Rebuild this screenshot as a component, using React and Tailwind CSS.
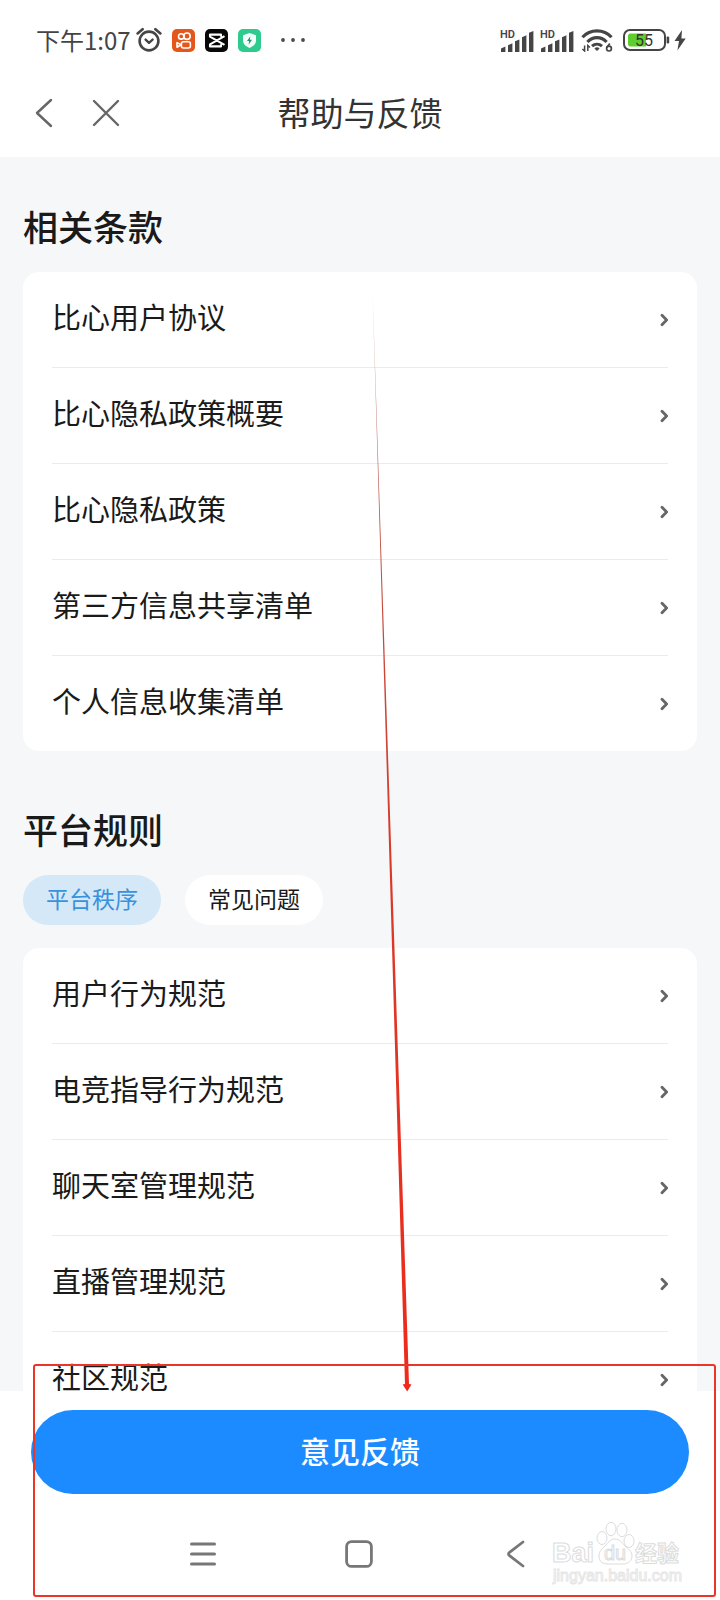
import React, { useState } from 'react';

const terms = ['比心用户协议', '比心隐私政策概要', '比心隐私政策', '第三方信息共享清单', '个人信息收集清单'];

const tabs = [
  { id: 'order', label: '平台秩序' },
  { id: 'faq', label: '常见问题' },
];

const rules = ['用户行为规范', '电竞指导行为规范', '聊天室管理规范', '直播管理规范', '社区规范'];

const AlarmIcon = () => (
  <svg width="26" height="26" viewBox="0 0 26 26" fill="none" stroke="#454545" strokeLinecap="round" strokeLinejoin="round">
    <circle cx="13" cy="14" r="9.4" strokeWidth="2.6" />
    <path d="M9.6 12.6l3.4 3.2 3.6-3.2" strokeWidth="2.4" />
    <path d="M1.6 6.4L6.6 2.2M24.4 6.4l-5-4.2" strokeWidth="2.6" />
  </svg>
);

const KuaishouIcon = () => (
  <svg width="23" height="23" viewBox="0 0 23 23" fill="none" stroke="#fff" strokeWidth="1.6">
    <rect width="23" height="23" rx="5" fill="#e4561c" stroke="none" />
    <circle cx="9.2" cy="7.4" r="2.7" />
    <circle cx="15" cy="7.2" r="3.2" />
    <rect x="9.4" y="12.8" width="9" height="6.2" rx="2" />
    <path d="M9 15.8l-4-2.2v4.6z" strokeLinejoin="round" />
  </svg>
);

const CapCutIcon = () => (
  <svg width="23" height="23" viewBox="0 0 23 23" fill="none" stroke="#fff" strokeWidth="2.1" strokeLinejoin="round">
    <rect width="23" height="23" rx="5" fill="#080808" stroke="none" />
    <path d="M19.5 7.2L5 15.4v2h11v-2.2M19.5 15.8L5 7.6v-2h11v2.2" />
  </svg>
);

const ShieldIcon = () => (
  <svg width="23" height="23" viewBox="0 0 23 23">
    <rect width="23" height="23" rx="5" fill="#2fcb8e" />
    <path d="M11.5 4L18 6.3v5c0 3.6-2.6 6.2-6.5 7.7C7.6 17.5 5 14.9 5 11.3v-5z" fill="#f2fffa" />
    <path d="M12.4 7.2L9 12h2.2l-.6 3.7L14 10.8h-2.2z" fill="#23936b" />
  </svg>
);

const SignalIcon = () => (
  <svg className="overflow-visible" width="34" height="28" viewBox="0 -4 34 28" fill="#454545">
    <text x="0" y="8" fontSize="11" fontWeight="600" fontFamily="Roboto, sans-serif">HD</text>
    <path d="M1 22v-3.5l4.4-2V22zM8 22v-6.8l4.4-2V22zM15 22V11.2l4.4-1.8V22zM22 22V7.2l4.4-2V22zM29 22V2.8L33.4 1v21z" />
  </svg>
);

const WifiIcon = () => (
  <svg width="32" height="24" viewBox="0 0 32 24" fill="none" stroke="#454545">
    <path d="M1.5 9.3C9.2.8 22.8.8 30.5 9.3" strokeWidth="3.2" />
    <path d="M6.4 14c5.2-5.8 14-5.8 19.2 0" strokeWidth="3.1" />
    <path d="M11 18.2c2.9-2.6 7.1-2.6 10 0" strokeWidth="3" />
    <path d="M13.4 20.5a3.7 3.7 0 0 1 5.2 0L16 23z" fill="#454545" stroke="none" />
    <path d="M3.6 17.5V23l-2.2-2M6.8 23v-5.5l2.2 2" strokeWidth="1.5" />
    <path d="M28.8 15.6l-3 4" strokeWidth="1.7" />
    <circle cx="28" cy="20.6" r="2.4" strokeWidth="1.7" />
  </svg>
);

const BatteryIcon = () => (
  <svg width="47" height="22" viewBox="0 0 47 22">
    <rect x="1" y="1" width="41" height="20" rx="6" fill="#fff" stroke="#454545" strokeWidth="2" />
    <path d="M7.5 4.5H23v13H7.5A2.5 2.5 0 0 1 5 15V7a2.5 2.5 0 0 1 2.5-2.5z" fill="#5fcd2e" />
    <rect x="43.6" y="7.5" width="2.6" height="7" rx="1" fill="#454545" />
    <text x="21" y="16.5" fontSize="16" textAnchor="middle" fill="#333" fontFamily="Roboto, sans-serif">55</text>
  </svg>
);

const BoltIcon = () => (
  <svg width="12" height="22" viewBox="0 0 12 22" fill="#454545">
    <path d="M8 1L.5 12H5l-1.6 9.5L11.7 9.5H7.4z" />
  </svg>
);

const StatusBar = () => (
  <div className="flex h-[70px] items-center justify-between pt-[10px] pr-[34px] pl-9">
    <div className="flex items-center gap-[10px]">
      <div className="flex items-center gap-[5px]">
        <span className="text-2xl whitespace-nowrap text-[#444]">下午1:07</span>
        <AlarmIcon />
      </div>
      <KuaishouIcon />
      <CapCutIcon />
      <ShieldIcon />
      <svg className="ml-[10px]" width="24" height="4" viewBox="0 0 24 4" fill="#4a4a4a">
        <circle cx="2" cy="2" r="1.9" />
        <circle cx="12" cy="2" r="1.9" />
        <circle cx="22" cy="2" r="1.9" />
      </svg>
    </div>
    <div className="flex items-center gap-[6px]">
      <SignalIcon />
      <SignalIcon />
      <div className="flex items-center gap-[10px] pl-[1px]">
        <WifiIcon />
        <div className="flex items-center gap-1">
          <BatteryIcon />
          <BoltIcon />
        </div>
      </div>
    </div>
  </div>
);

const Header = () => (
  <header className="flex h-[87px] items-center px-[34px] pb-[2px]">
    <div className="flex flex-1 items-center gap-[38px]">
      <button type="button" aria-label="返回">
        <svg width="20" height="30" viewBox="0 0 20 30" fill="none" stroke="#666" strokeWidth="2.4" strokeLinecap="round" strokeLinejoin="round">
          <path d="M17 2L3 15l14 13" />
        </svg>
      </button>
      <button type="button" aria-label="关闭">
        <svg width="28" height="28" viewBox="0 0 28 28" fill="none" stroke="#666" strokeWidth="2.4" strokeLinecap="round">
          <path d="M2 2l24 24M26 2L2 26" />
        </svg>
      </button>
    </div>
    <h1 className="pb-[2px] text-[33px] leading-[48px] text-[#333]">帮助与反馈</h1>
    <div className="flex-1" />
  </header>
);

const LinkList = ({ items }) => (
  <ul className="divide-y divide-[#ebebeb] rounded-2xl bg-white px-[29px]">
    {items.map((item) => (
      <li key={item}>
        <a href="#" className="flex h-[95px] items-center justify-between text-[29px] leading-[30px] text-[#1a1a1a]">
          <span className="pb-[7px]">{item}</span>
          <svg width="8" height="14" viewBox="0 0 8 14" fill="none" stroke="#666" strokeWidth="2.8" strokeLinecap="round" strokeLinejoin="round">
            <path d="M2 2.2L6.6 7 2 11.8" />
          </svg>
        </a>
      </li>
    ))}
  </ul>
);

const NavBar = () => (
  <nav className="flex h-[106px] items-center justify-center gap-32 pt-[14px] pr-[2px]">
    <button type="button" aria-label="菜单">
      <svg width="28" height="28" viewBox="0 0 28 28" fill="none" stroke="#777" strokeWidth="3" strokeLinecap="round">
        <path d="M2.5 4h23M2.5 14h23M2.5 24h23" />
      </svg>
    </button>
    <button type="button" aria-label="主页">
      <svg width="28" height="28" viewBox="0 0 28 28" fill="none" stroke="#777" strokeWidth="2.8">
        <rect x="1.6" y="1.6" width="24.8" height="24.8" rx="5" />
      </svg>
    </button>
    <button type="button" aria-label="后退">
      <svg width="28" height="28" viewBox="0 0 28 28" fill="none" stroke="#777" strokeWidth="2.8" strokeLinecap="round" strokeLinejoin="round">
        <path d="M22 2L8.5 12.4q-2 1.6 0 3.2L22 26" />
      </svg>
    </button>
  </nav>
);

const Watermark = () => (
  <svg className="absolute right-[38px] bottom-[14px]" width="132" height="66" viewBox="0 0 132 66" fill="#fff" stroke="#dcdcdc" strokeWidth="1">
    <text x="2" y="42" fontSize="27" fontWeight="700" fontFamily="Liberation Sans, Arial, sans-serif">Bai</text>
    <ellipse cx="52" cy="18" rx="5" ry="6.5" />
    <ellipse cx="61" cy="9" rx="5" ry="6.7" />
    <ellipse cx="72" cy="10" rx="5" ry="6.7" />
    <ellipse cx="79" cy="21" rx="5" ry="6.5" />
    <path d="M65 19c-5 0-7 4-10 7-3 3-6 5-6 10 0 6 4 8 9 8h15c5 0 9-3 9-8 0-5-4-7-7-10-3-3-5-7-10-7z" />
    <text x="54" y="40" fontSize="20" fontFamily="Liberation Sans, Arial, sans-serif">du</text>
    <text x="85" y="41" fontSize="22" fontWeight="700" fontFamily="Noto Sans CJK SC, sans-serif">经验</text>
    <text x="3" y="61" fontSize="16" stroke="#e6e6e6" fontFamily="Liberation Sans, Arial, sans-serif">jingyan.baidu.com</text>
  </svg>
);

const Annotation = () => (
  <div className="pointer-events-none absolute inset-0">
    <svg className="h-full w-full" viewBox="0 0 720 1600" preserveAspectRatio="none">
      <defs>
        <linearGradient id="arrow" x1="0" y1="0" x2="0" y2="1">
          <stop offset="0" stopColor="#c9a9a4" />
          <stop offset="0.2" stopColor="#bd5547" />
          <stop offset="0.5" stopColor="#d83a29" />
          <stop offset="1" stopColor="#ee2a1b" />
        </linearGradient>
      </defs>
      <path d="M372.5 290L409 1384l2.5.5-4.3 7-4.5-7 2.3-.5z" fill="url(#arrow)" />
    </svg>
    <div className="absolute right-1 bottom-[3px] left-[33px] h-[233px] rounded-[3px] border-2 border-[#ea3527]" />
  </div>
);

const App = () => {
  const [activeTab, setActiveTab] = useState('order');

  return (
    <div className="relative flex h-screen flex-col overflow-hidden bg-white font-['Noto_Sans_CJK_SC',sans-serif]">
      <StatusBar />
      <Header />
      <main className="min-h-0 flex-1 overflow-y-auto bg-[#f5f7f9] px-[23px] pt-[45px] [scrollbar-width:none]">
        <section>
          <h2 className="mb-[22px] text-[35px] leading-[48px] font-medium text-[#1a1a1a]">相关条款</h2>
          <LinkList items={terms} />
        </section>
        <section className="mt-[54px]">
          <h2 className="mb-[22px] text-[35px] leading-[48px] font-medium text-[#1a1a1a]">平台规则</h2>
          <div className="mb-[23px] flex gap-6">
            {tabs.map((tab) => (
              <button
                key={tab.id}
                type="button"
                onClick={() => setActiveTab(tab.id)}
                className={
                  activeTab === tab.id
                    ? 'h-[50px] rounded-full bg-[#d5e8f7] px-[23px] pb-[3px] text-[23px] text-[#3a92dc]'
                    : 'h-[50px] rounded-full bg-white px-[23px] pb-[3px] text-[23px] text-[#1a1a1a]'
                }
              >
                {tab.label}
              </button>
            ))}
          </div>
          <LinkList items={rules} />
        </section>
      </main>
      <footer className="bg-white pt-[19px]">
        <div className="px-[31px]">
          <button type="button" className="h-[84px] w-full rounded-full bg-[#1b8bff] pb-1 text-[30px] font-medium text-white">
            意见反馈
          </button>
        </div>
        <NavBar />
      </footer>
      <Watermark />
      <Annotation />
    </div>
  );
};

export default App;
